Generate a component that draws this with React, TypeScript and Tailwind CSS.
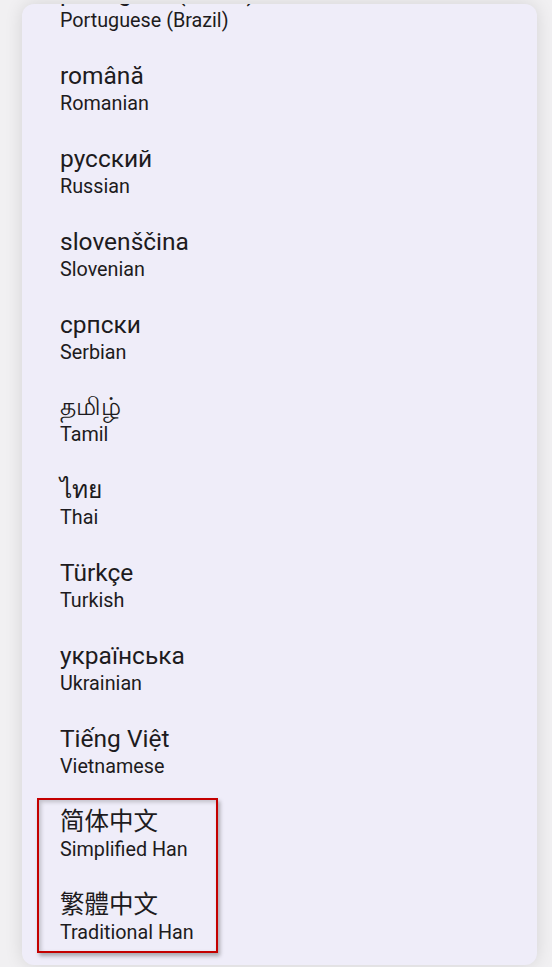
const languages = [
  { native: "português (Brasil)", english: "Portuguese (Brazil)" },
  { native: "română", english: "Romanian" },
  { native: "русский", english: "Russian" },
  { native: "slovenščina", english: "Slovenian" },
  { native: "српски", english: "Serbian" },
  { native: "தமிழ்", english: "Tamil" },
  { native: "ไทย", english: "Thai" },
  { native: "Türkçe", english: "Turkish" },
  { native: "українська", english: "Ukrainian" },
  { native: "Tiếng Việt", english: "Vietnamese" },
  { native: "简体中文", english: "Simplified Han", cjk: "sc" },
  { native: "繁體中文", english: "Traditional Han", cjk: "tc" },
];

const LanguageRow = ({ native, english, cjk }: { native: string; english: string; cjk?: string }) => {
  const nativeFont =
    cjk === "tc"
      ? "font-['Roboto','Noto_Sans_CJK_TC',sans-serif]"
      : "font-['Roboto','Noto_Sans_CJK_SC','Noto_Sans',sans-serif]";
  return (
    <div className="flex flex-col pl-[38px] py-[13.465px]">
      <p className={`text-[24.5px] leading-[28px] text-[#1d1b20] ${nativeFont}`}>{native}</p>
      <p className="text-[19.75px] leading-[28px] text-[#1d1b20] font-['Roboto',sans-serif]">{english}</p>
    </div>
  );
};

export default function App() {
  return (
    <div className="relative w-[552px] h-[967px] overflow-hidden bg-[#f1f0f2] pt-[4px] px-[22px]">
      {/* dialog */}
      <div className="w-[515px] h-[961px] rounded-[12px] overflow-hidden bg-[#efedf9] shadow-[0_0_18px_rgba(0,0,0,0.12)]">
        <div className="flex flex-col mt-[-38.5px]">
          {languages.map((l) => (
            <LanguageRow key={l.english} {...l} />
          ))}
        </div>
      </div>

      {/* highlight annotation */}
      <div className="absolute left-[37px] top-[798px] w-[181px] h-[155px] border-2 border-[#c40000] shadow-[2px_3px_4px_rgba(0,0,0,0.3),inset_2px_2px_4px_rgba(0,0,0,0.2)]" />
    </div>
  );
}
